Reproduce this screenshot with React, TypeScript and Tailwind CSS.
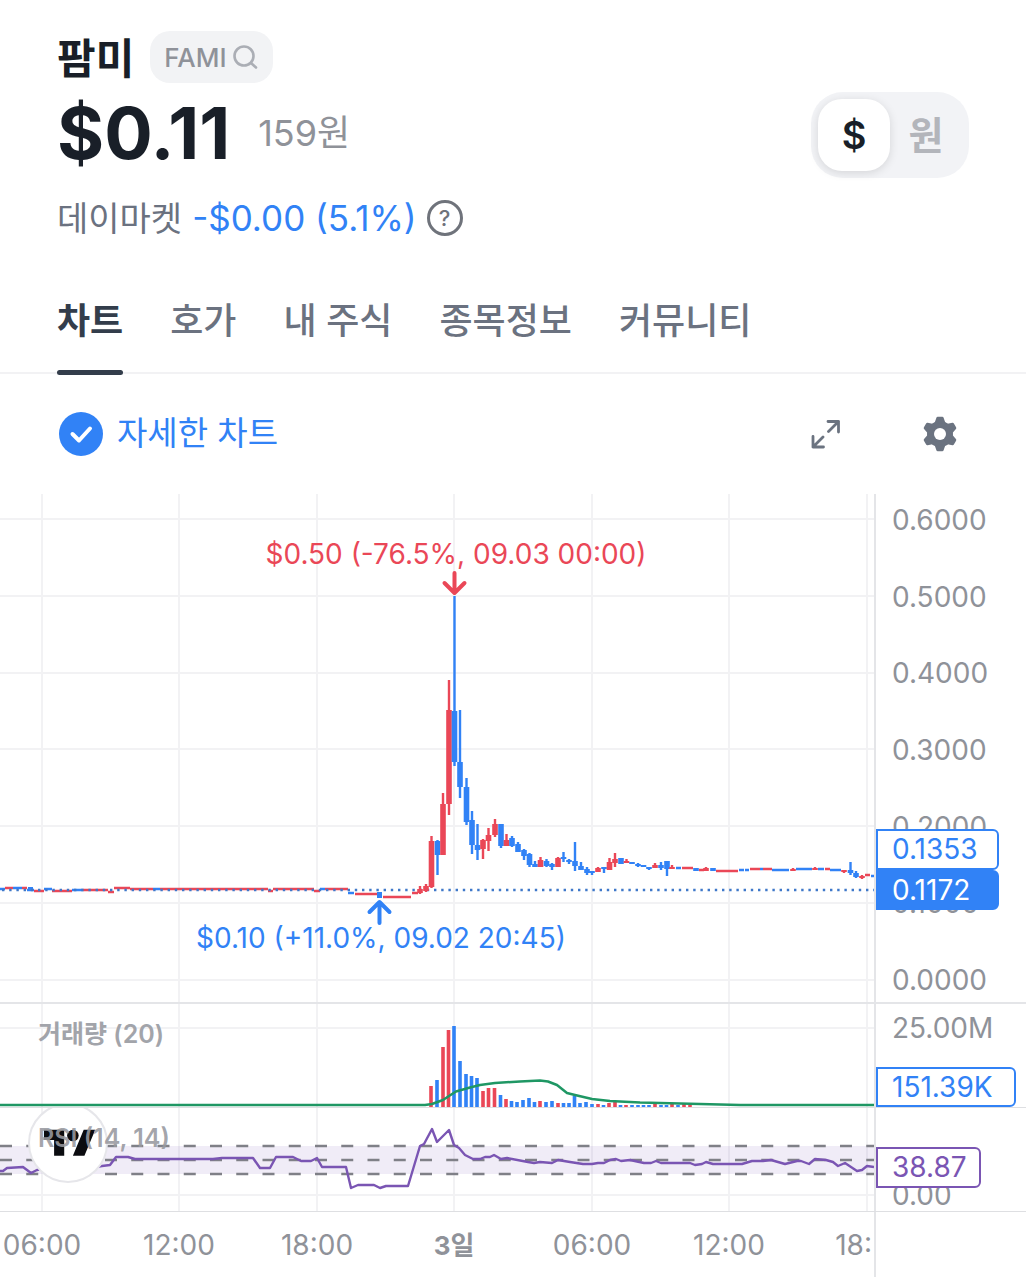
import { useState } from 'react'
import clsx from 'clsx'

type Side = 'up' | 'down'

// x, high, body top, body bottom, low, side
type Candle = [number, number, number, number, number, Side]

const COLOR = {
  up: '#ea4757',
  down: '#3182f6',
  grid: '#f2f2f4',
  average: '#1f9764',
  rsi: '#7a55b3',
  dash: '#7f8087',
}

const TABS = ['차트', '호가', '내 주식', '종목정보', '커뮤니티']
const PRICE_TICKS = ['0.6000', '0.5000', '0.4000', '0.3000', '0.2000', '0.1000', '0.0000']
const GRID_X = [42, 179, 317, 454, 592, 729, 867]
const GRID_Y = [25, 102, 179, 255, 332, 409, 486]
const TIMES = ['06:00', '12:00', '18:00', '3일', '06:00', '12:00']

const CANDLES: Candle[] = [
  [420, 392, 395, 399, 400, 'up'],
  [426, 390, 392, 397, 398, 'up'],
  [431.5, 342, 347, 393, 394, 'up'],
  [437.5, 346, 347, 361, 381, 'down'],
  [443, 299, 310, 361, 361, 'up'],
  [449, 186, 216, 310, 321, 'up'],
  [454.5, 102, 217, 268, 272, 'down'],
  [460, 216, 268, 293, 304, 'down'],
  [466.5, 284, 293, 328, 331, 'down'],
  [472, 317, 326, 351, 360, 'down'],
  [477.5, 330, 351, 356, 366, 'down'],
  [483, 345, 346, 355, 365, 'up'],
  [488.5, 334, 341, 347, 357, 'up'],
  [495, 325, 330, 341, 343, 'up'],
  [501, 330, 330, 352, 354, 'down'],
  [506.5, 340, 346, 352, 352, 'up'],
  [512, 342, 344, 352, 353, 'down'],
  [518, 348, 350, 358, 358, 'down'],
  [524, 355, 356, 362, 366, 'down'],
  [529.5, 359, 360, 371, 373, 'down'],
  [535, 367, 370, 373, 373, 'down'],
  [540.5, 363, 366, 373, 373, 'up'],
  [546.5, 365, 367, 372, 373, 'down'],
  [552, 369, 370, 373, 376, 'down'],
  [558, 363, 364, 373, 373, 'up'],
  [563.5, 358, 363, 365, 368, 'down'],
  [569, 365, 366, 368, 370, 'down'],
  [575, 348, 367, 372, 377, 'down'],
  [581, 368, 372, 376, 376, 'down'],
  [587, 373, 375, 379, 381, 'down'],
  [592, 377, 377, 379, 381, 'down'],
  [598, 373, 374, 378, 378, 'up'],
  [604, 373, 373, 375, 379, 'down'],
  [609.5, 364, 368, 376, 376, 'up'],
  [615, 359, 365, 369, 373, 'up'],
  [621, 364, 364, 370, 370, 'down'],
  [626.5, 365, 367, 369, 369, 'up'],
  [632, 368, 368, 370, 370, 'down'],
  [638, 369, 370, 372, 373, 'down'],
  [643.5, 371, 371, 373, 373, 'down'],
  [649, 373, 373, 375, 376, 'down'],
  [655, 369, 371, 374, 374, 'up'],
  [661, 368, 371, 374, 376, 'down'],
  [667, 367, 367, 375, 382, 'down'],
  [672, 371, 373, 375, 375, 'up'],
  [696, 374, 374, 377, 377, 'down'],
  [706, 373, 374, 377, 377, 'up'],
  [713, 374, 374, 377, 377, 'down'],
  [793, 374, 375, 377, 377, 'up'],
  [815, 373, 374, 376, 376, 'up'],
  [844, 376, 376, 378, 379, 'up'],
  [850.5, 368, 376, 379, 381, 'down'],
  [856, 377, 379, 383, 384, 'down'],
  [862, 381, 382, 384, 385, 'up'],
]

// Stretches where open and close are practically the same: x1, x2, y, side
const FLATS: [number, number, number, Side][] = [
  [0, 5, 395, 'down'],
  [5, 13, 394, 'up'],
  [13, 22, 394, 'down'],
  [22, 27, 394, 'up'],
  [27, 34, 396, 'down'],
  [34, 44, 397, 'up'],
  [44, 52, 395, 'down'],
  [52, 72, 397, 'up'],
  [72, 83, 396, 'down'],
  [83, 108, 396, 'up'],
  [108, 114, 398, 'up'],
  [114, 130, 394, 'up'],
  [130, 153, 395, 'up'],
  [153, 160, 395, 'down'],
  [160, 268, 395, 'up'],
  [268, 273, 397, 'up'],
  [273, 314, 395, 'up'],
  [314, 320, 397, 'up'],
  [320, 325, 395, 'down'],
  [325, 348, 395, 'up'],
  [348, 354, 399, 'down'],
  [355, 377, 400, 'up'],
  [383, 411, 403, 'up'],
  [412, 418, 399, 'up'],
  [676, 681, 374, 'down'],
  [682, 693, 374, 'up'],
  [699, 704, 376, 'up'],
  [716, 738, 377, 'up'],
  [739, 744, 376, 'down'],
  [745, 749, 376, 'down'],
  [750, 760, 375, 'up'],
  [760, 763, 375, 'down'],
  [763, 772, 375, 'up'],
  [772, 789, 376, 'down'],
  [796, 812, 375, 'down'],
  [818, 824, 375, 'down'],
  [825, 830, 375, 'up'],
  [830, 841, 376, 'down'],
  [865, 870, 381, 'up'],
  [871, 874, 382, 'down'],
]

// x, bar height, side
const VOLUMES: [number, number, Side][] = [
  [431, 21, 'up'],
  [437, 27, 'down'],
  [443, 60, 'up'],
  [448.5, 77, 'up'],
  [454, 81, 'down'],
  [460, 46, 'down'],
  [466, 33, 'down'],
  [471.5, 31, 'down'],
  [477, 29, 'down'],
  [483, 16, 'up'],
  [488.5, 19, 'up'],
  [494.5, 19, 'up'],
  [500.5, 12, 'down'],
  [506, 8, 'up'],
  [511.5, 6, 'down'],
  [517, 5, 'down'],
  [523, 7, 'down'],
  [529, 9, 'down'],
  [534.5, 5, 'down'],
  [540, 6, 'up'],
  [546, 5, 'down'],
  [552, 6, 'down'],
  [558, 4, 'up'],
  [563.5, 4, 'down'],
  [569, 4, 'down'],
  [574.5, 11, 'down'],
  [580, 4, 'down'],
  [586, 5, 'down'],
  [592, 3, 'down'],
  [598, 3, 'up'],
  [603.5, 2, 'down'],
  [609, 4, 'up'],
  [615, 5, 'up'],
  [620.5, 2, 'down'],
  [626, 2, 'up'],
  [632, 2, 'down'],
  [638, 2, 'down'],
  [643.5, 2, 'down'],
  [649, 2, 'down'],
  [655, 3, 'up'],
  [661, 2, 'down'],
  [666.5, 2, 'down'],
  [672, 3, 'up'],
  [678, 2, 'down'],
  [684, 3, 'up'],
  [690, 2, 'up'],
]

const AVERAGE_PATH =
  'M0 101H425L432 100L443 96L449 92L456 87.5L470 83.5L480 81L495 79L520 77.5L540 76.5L548 77.5L557 81L567 89L575 91L592 95L610 97L640 98.5L700 100L740 101H874'

const RSI_POINTS =
  '0,63 3,63 7,60 23,59 31,65 37,62 60,58 90,60 102,58 110,57 116,49 128,49 135,51 213,51 222,50 253,50 260,60 270,60 276,49 293,49 301,53 311,53 317,50 322,59 346,59 351,80 358,77 374,77 380,80 386,78 408,78 420,38 424,36 432,21 437,34 449,22 454,37 459,40 465,47 473,51 480,51 485,49 490,49 494,47 501,51 507,50 528,54 534,55 540,54 552,55 558,52 570,54 583,56 592,56 598,55 604,55 610,52 616,51 621,53 630,52 644,55 651,55 656,53 661,55 690,55 695,57 702,56 706,54 713,56 742,56 752,53 763,53 771,52 785,56 797,53 801,53 809,56 815,51 826,52 833,54 838,58 845,55 857,63 862,62 867,58 874,59'

function GridColumns({ height }: { height: number }) {
  return (
    <>
      {GRID_X.map((x) => (
        <line key={x} x1={x} x2={x} y1={0} y2={height} stroke={COLOR.grid} strokeWidth={2} />
      ))}
    </>
  )
}

function SearchIcon() {
  return (
    <svg width="26" height="26" viewBox="0 0 26 26" fill="none" stroke="#abaeb5" strokeWidth="2.600" strokeLinecap="round" aria-hidden="true">
      <circle cx="11" cy="12" r="9.5" />
      <path d="M18 19l5 4.500" />
    </svg>
  )
}

function ExpandIcon() {
  return (
    <svg width="30" height="30" viewBox="0 0 30 30" fill="none" stroke="#6b7380" strokeWidth="2.800" strokeLinecap="round" strokeLinejoin="round" aria-hidden="true">
      <path d="M18 2.500H28.500v10.500M18.500 12.500l10-10M3 17.500V28h10.500M3 28l10-10" />
    </svg>
  )
}

function GearIcon() {
  return (
    <svg width="36" height="36" viewBox="0 0 36 36" aria-hidden="true">
      <g fill="#6b7380" stroke="#6b7380" strokeLinejoin="round" strokeWidth="3">
        <circle cx="18" cy="18" r="11.500" />
        {[0, 60, 120, 180, 240, 300].map((angle) => (
          <path key={angle} d="M15.800 2.200h4.400L22.500 9h-9z" transform={`rotate(${angle} 18 18)`} />
        ))}
      </g>
      <circle cx="18" cy="18" r="6" fill="#fff" />
    </svg>
  )
}

function Header() {
  const [currency, setCurrency] = useState('$')

  return (
    <header className="flex items-center justify-between pt-[30px] pr-[57px] pl-[57px]">
      <div>
        <div className="flex h-[54px] items-center gap-4">
          <h1 className="pt-1 text-[42px] leading-none font-bold text-[#191f28]">팜미</h1>
          <button type="button" className="flex h-[52px] items-center gap-[6px] rounded-[20px] bg-[#f2f3f5] px-[14px] text-[26px] font-medium text-[#8f9299]">
            FAMI
            <SearchIcon />
          </button>
        </div>
        <div className="flex h-[98px] items-center gap-7">
          <strong className="text-[72px] leading-none font-bold text-[#191f28]">$0.11</strong>
          <span className="text-[36px] text-[#8f9299]">159원</span>
        </div>
        <div className="flex h-[72px] items-center gap-[10px] text-[34px]">
          <span className="text-[#6b7280]">데이마켓</span>
          <span className="text-[35px] text-[#3182f6]">-$0.00 (5.1%)</span>
          <button type="button" aria-label="도움말" className="flex size-9 items-center justify-center rounded-full border-[3px] border-[#6f737b] text-[22px] font-medium text-[#6f737b]">
            ?
          </button>
        </div>
      </div>
      <div className="-mt-[14px] flex rounded-[32px] bg-[#f2f3f6] p-[7px] text-[38px] font-semibold">
        {['$', '원'].map((unit) => (
          <button
            key={unit}
            type="button"
            aria-pressed={currency === unit}
            onClick={() => setCurrency(unit)}
            className={clsx(
              'size-[72px] rounded-[24px]',
              currency === unit ? 'bg-white text-[#191f28] shadow-[0_2px_10px_rgba(0,0,0,0.12)]' : 'text-[#b3b5bb]',
            )}
          >
            {unit}
          </button>
        ))}
      </div>
    </header>
  )
}

function Tabs() {
  const [active, setActive] = useState(TABS[0])

  return (
    <nav className="mt-[10px] flex gap-[47px] border-b-2 border-[#f2f2f4] px-[57px]">
      {TABS.map((tab) => (
        <button
          key={tab}
          type="button"
          onClick={() => setActive(tab)}
          className={clsx('relative h-[108px] pt-[6px] text-[36px]', tab === active ? 'font-bold text-[#333d4b]' : 'font-medium text-[#6b7280]')}
        >
          {tab}
          {tab === active && <span className="absolute inset-x-0 -bottom-[3px] h-[5px] rounded-sm bg-[#333d4b]" />}
        </button>
      ))}
    </nav>
  )
}

function Toolbar() {
  return (
    <div className="flex h-[120px] items-center justify-between pr-[68px] pl-[59px]">
      <label className="flex items-center gap-[14px] text-[33px] text-[#3182f6]">
        <span className="grid">
          <input type="checkbox" defaultChecked className="peer col-start-1 row-start-1 size-11 appearance-none rounded-full bg-[#d1d6db] checked:bg-[#3182f6]" />
          <svg className="pointer-events-none col-start-1 row-start-1" width="44" height="44" viewBox="0 0 44 44" fill="none" stroke="#fff" strokeWidth="4" strokeLinecap="round" strokeLinejoin="round" aria-hidden="true">
            <path d="M13.500 22l6.500 6.500L31 16.500" />
          </svg>
        </span>
        자세한 차트
      </label>
      <div className="flex items-center gap-[82px]">
        <button type="button" aria-label="전체 화면">
          <ExpandIcon />
        </button>
        <button type="button" aria-label="차트 설정">
          <GearIcon />
        </button>
      </div>
    </div>
  )
}

function PricePane() {
  return (
    <div className="flex border-b-2 border-[#e4e5e8]">
      <svg viewBox="0 0 874 508" className="block h-auto min-w-0 flex-1 text-[28px]">
        <GridColumns height={508} />
        {GRID_Y.map((y) => (
          <line key={y} x1={0} x2={874} y1={y} y2={y} stroke={COLOR.grid} strokeWidth={2} />
        ))}
        {FLATS.map(([x1, x2, y, side]) => (
          <line key={x1} x1={x1} x2={x2} y1={y} y2={y} stroke={COLOR[side]} strokeWidth={2.5} />
        ))}
        <rect x={28} y={393} width={5} height={4} fill={COLOR.down} />
        <rect x={377} y={398} width={5} height={6} fill={COLOR.down} />
        <line x1={2} x2={874} y1={396} y2={396} stroke="#3f78c9" strokeWidth={2.4} strokeDasharray="2.4 4.8" />
        {CANDLES.map(([x, high, top, bottom, low, side]) => (
          <g key={x} fill={COLOR[side]}>
            <rect x={x - 1.2} y={high} width={2.4} height={low - high} />
            <rect x={x - 2.8} y={top} width={5.6} height={bottom - top} />
          </g>
        ))}
        <g fill="none" strokeWidth={4} strokeLinecap="round" strokeLinejoin="round">
          <path d="M454.500 79v19M444.500 89l10 10 10-10" stroke={COLOR.up} />
          <path d="M379.500 429v-20M369.500 418l10-10 10 10" stroke={COLOR.down} />
        </g>
        <text x={456} y={70} textAnchor="middle" fill={COLOR.up}>
          $0.50 (-76.5%, 09.03 00:00)
        </text>
        <text x={381} y={454} textAnchor="middle" fill={COLOR.down}>
          $0.10 (+11.0%, 09.02 20:45)
        </text>
      </svg>
      <div className="relative flex w-[152px] flex-col justify-between border-l-2 border-[#e4e5e8] pt-[6px] pb-[2px] pl-4 text-[28px] leading-10 text-[#8f9299]">
        {PRICE_TICKS.map((tick) => (
          <span key={tick}>{tick}</span>
        ))}
        <div className="absolute top-[66%] left-0 w-[123px] text-[28px]">
          <div className="rounded-r-md border-2 border-[#3182f6] bg-white pl-[14px] leading-[37px] text-[#3182f6]">0.1353</div>
          <div className="rounded-r-md border-2 border-[#3182f6] bg-[#3182f6] pl-[14px] leading-9 text-white">0.1172</div>
        </div>
      </div>
    </div>
  )
}

function VolumePane() {
  return (
    <div className="relative flex border-b border-[#dedfe2]">
      <svg viewBox="0 0 874 103" className="block h-auto min-w-0 flex-1">
        <GridColumns height={103} />
        <line x1={0} x2={874} y1={24} y2={24} stroke={COLOR.grid} strokeWidth={2} />
        {VOLUMES.map(([x, height, side]) => (
          <rect key={x} x={x - 1.8} y={103 - height} width={3.6} height={height} fill={COLOR[side]} />
        ))}
        <path d={AVERAGE_PATH} fill="none" stroke={COLOR.average} strokeWidth={2.5} strokeLinejoin="round" />
      </svg>
      <span className="absolute top-3 left-[38px] text-[25px] font-semibold text-[#a2a4aa]">거래량 (20)</span>
      <div className="relative w-[152px] border-l-2 border-[#e4e5e8] pt-1 pl-4 text-[28px] leading-10 text-[#8f9299]">
        25.00M
        <span className="absolute bottom-0 left-0 w-[140px] rounded-r-md border-2 border-[#3182f6] bg-white pl-[14px] leading-9 text-[#3182f6]">151.39K</span>
      </div>
    </div>
  )
}

function RsiPane() {
  return (
    <div className="relative flex border-b border-[#dedfe2]">
      <svg viewBox="0 0 874 103" className="block h-auto min-w-0 flex-1">
        <GridColumns height={103} />
        <line x1={0} x2={874} y1={87} y2={87} stroke={COLOR.grid} strokeWidth={2} />
        <rect x={0} y={38} width={874} height={28} fill={COLOR.rsi} fillOpacity={0.11} />
        {[38, 52, 66].map((y) => (
          <line key={y} x1={0} x2={874} y1={y} y2={y} stroke={COLOR.dash} strokeWidth={2.5} strokeDasharray="12 14.25" />
        ))}
        <polyline points={RSI_POINTS} fill="none" stroke={COLOR.rsi} strokeWidth={2.4} strokeLinejoin="round" />
        <circle cx={68} cy={35} r={39} fill="#fff" stroke="#e6e6ea" strokeWidth={2} />
        <g fill="#0b0c10" transform="translate(44 16) scale(1.444)">
          <path d="M14 22H7V11H0V4h14v18zM28 22h-8l7.500-18h8L28 22z" />
          <circle cx={20} cy={8} r={4} />
        </g>
      </svg>
      <span className="absolute top-3 left-[38px] text-[25px] font-semibold text-[#98999f]/90">RSI (14, 14)</span>
      <div className="relative flex w-[152px] items-end border-l-2 border-[#e4e5e8] pl-4 text-[28px] leading-8 text-[#8f9299]">
        0.00
        <span className="absolute top-[39px] left-0 w-[105px] rounded-r-md border-2 border-[#7a55b3] bg-white pl-[14px] leading-[37px] text-[#7a55b3]">38.87</span>
      </div>
    </div>
  )
}

function TimeAxis() {
  return (
    <div className="flex">
      <svg viewBox="0 0 874 65" className="block h-auto min-w-0 flex-1 text-[28px]" fill="#8f9299" textAnchor="middle">
        {TIMES.map((time, i) => (
          <text key={GRID_X[i]} x={GRID_X[i]} y={43} className={clsx(time === '3일' && 'text-[26px] font-bold')}>
            {time}
          </text>
        ))}
        <text x={872} y={43} textAnchor="end">
          18:
        </text>
      </svg>
      <div className="w-[152px] border-l-2 border-[#e4e5e8]" />
    </div>
  )
}

export default function App() {
  return (
    <main className="min-h-screen overflow-hidden bg-white font-['Inter','Noto_Sans_CJK_KR',sans-serif]">
      <Header />
      <Tabs />
      <Toolbar />
      <section aria-label="팜미 주가 차트">
        <PricePane />
        <VolumePane />
        <RsiPane />
        <TimeAxis />
      </section>
    </main>
  )
}
